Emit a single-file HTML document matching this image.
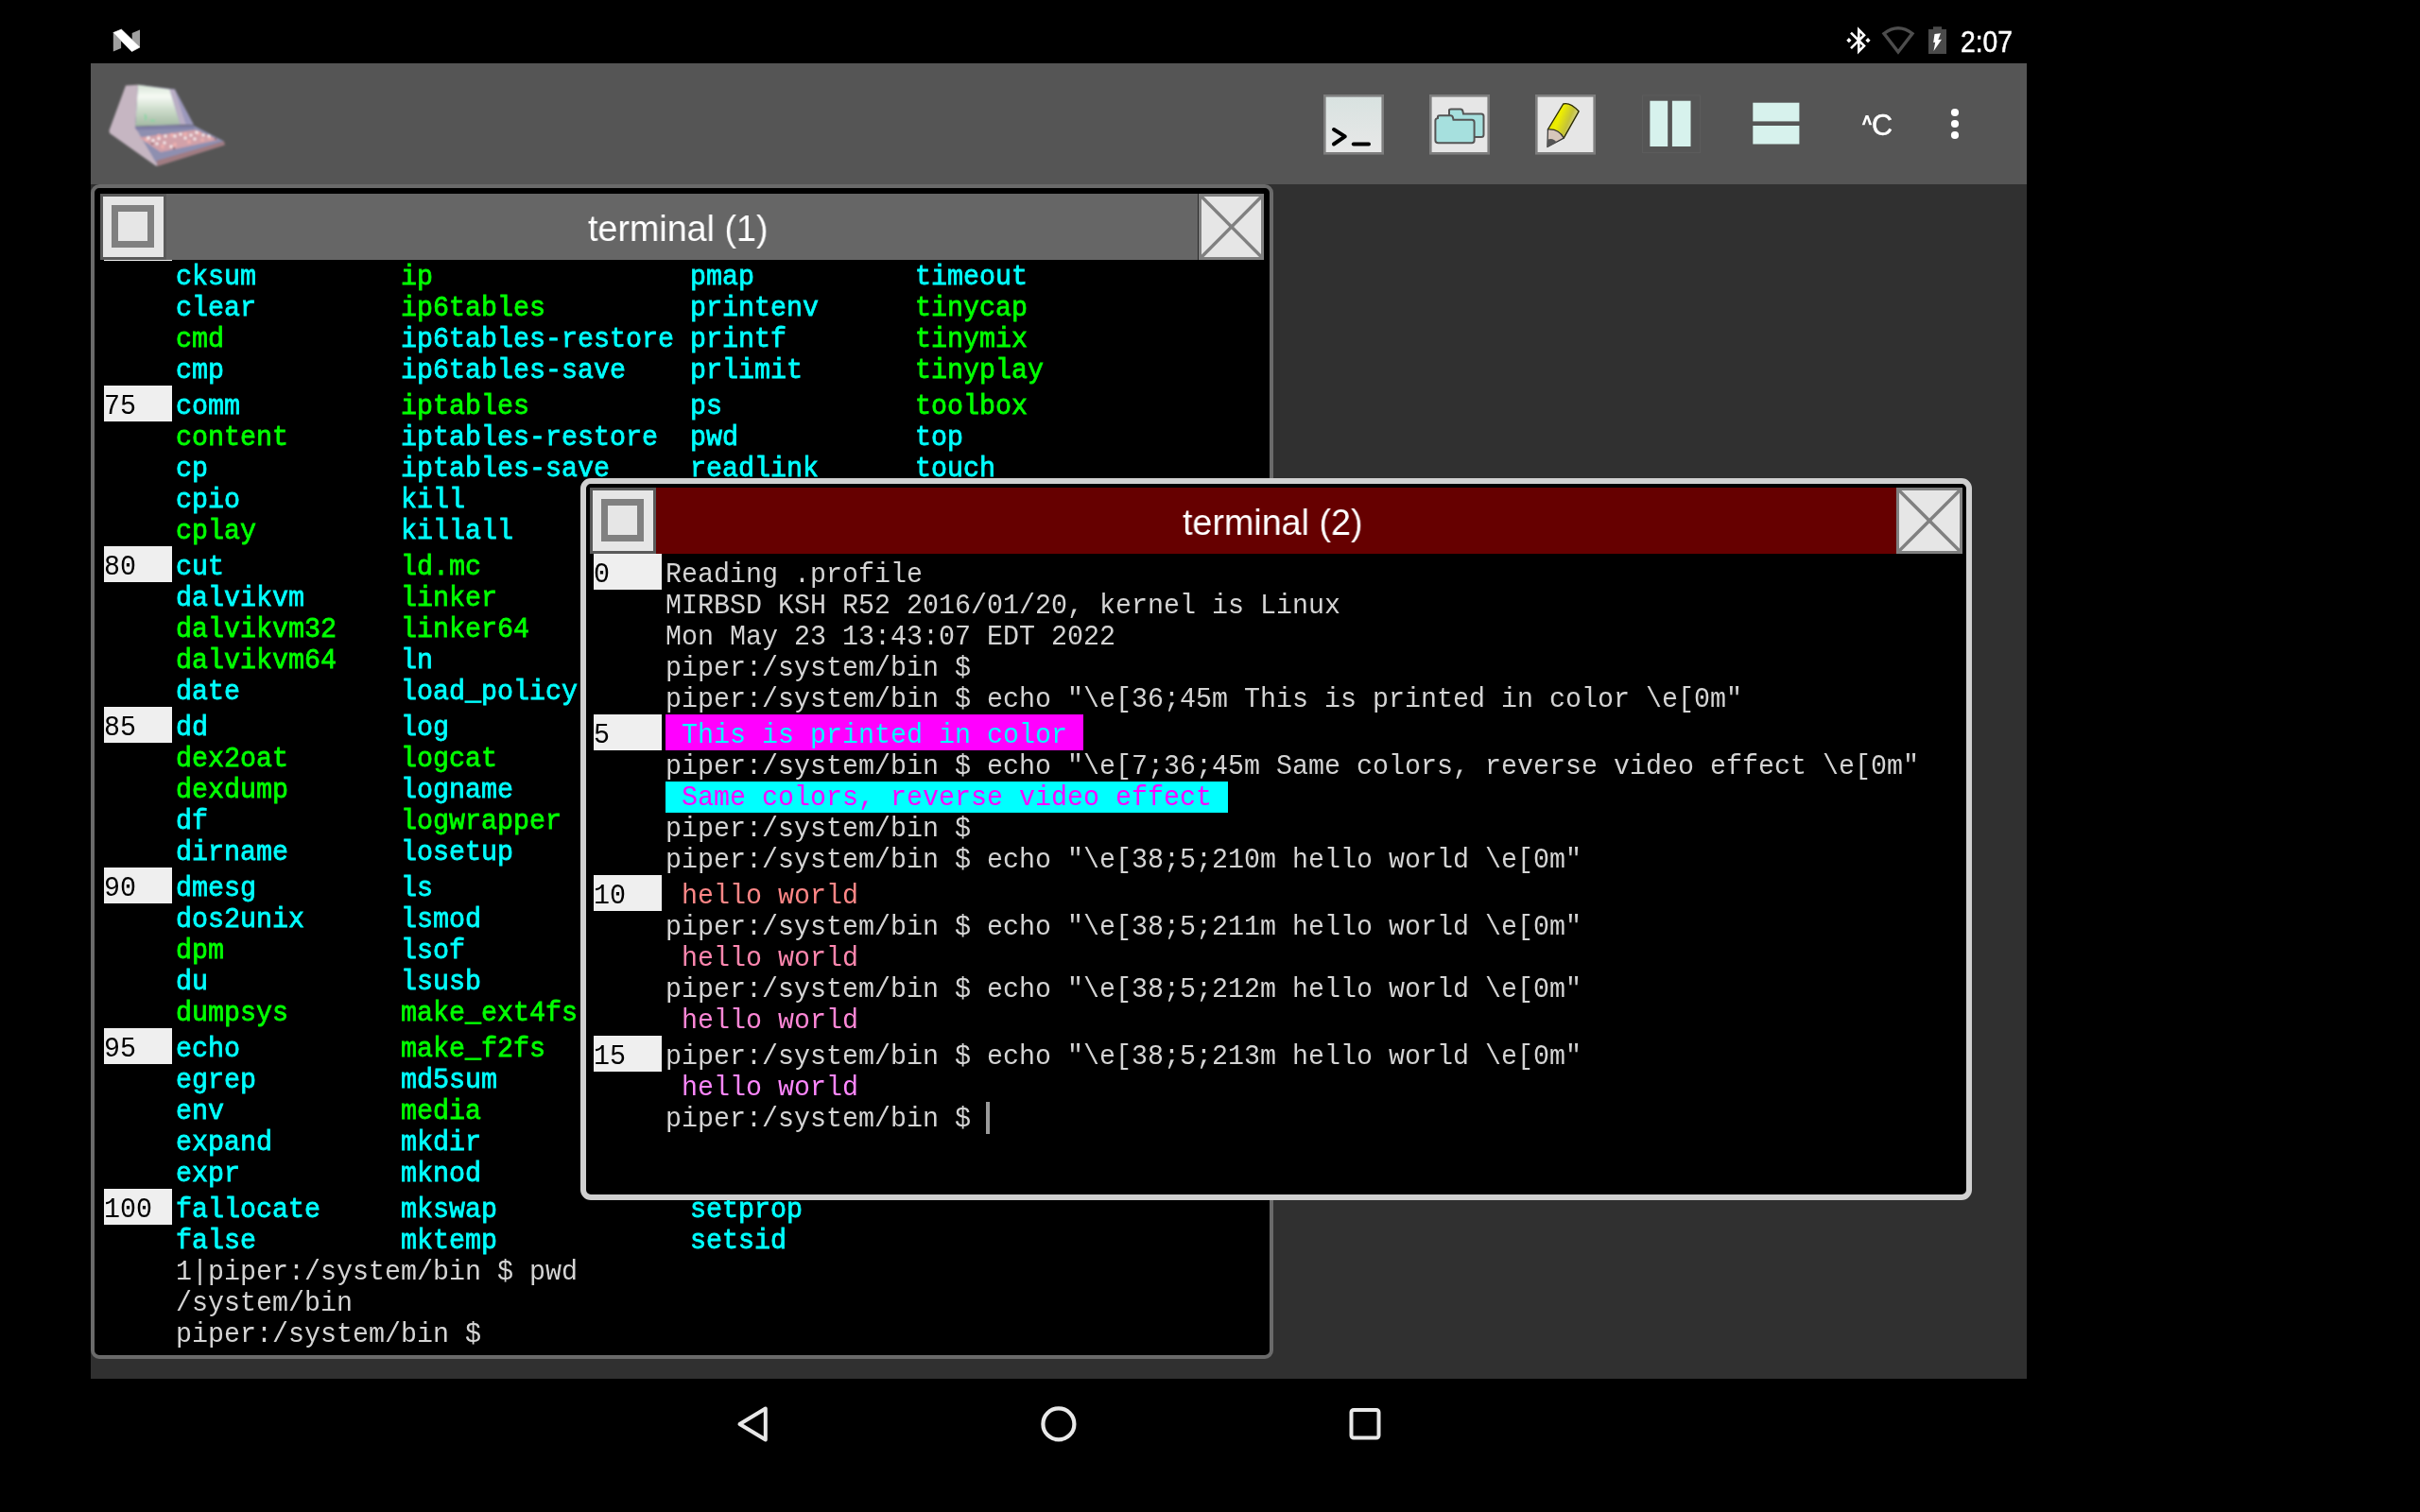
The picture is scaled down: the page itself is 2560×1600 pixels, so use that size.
<!DOCTYPE html>
<html><head><meta charset="utf-8">
<style>
html,body{margin:0;padding:0;}
.ln,.lnt,.title{will-change:transform;}
body{width:2560px;height:1600px;background:#000;position:relative;overflow:hidden;font-family:"Liberation Sans",sans-serif;}
.abs{position:absolute;}
#toolbar{position:absolute;left:96px;top:67px;width:2048px;height:128px;background:#555555;}
#desk{position:absolute;left:96px;top:195px;width:2048px;height:1264px;background:#303030;}
.win{position:absolute;box-sizing:border-box;background:#000;overflow:hidden;}
#w1{left:96px;top:195px;width:1251px;height:1243px;border:4px solid #6a6a6a;border-radius:9px;}
#w2{left:614px;top:506px;width:1472px;height:764px;border:6px solid #d0d0d0;border-radius:11px;}
.inner{position:absolute;left:0;top:0;}
.tb{position:absolute;}
.btn{position:absolute;width:70px;height:70px;}
.ln{position:absolute;white-space:pre;font-family:"Liberation Mono",monospace;font-size:28.333px;line-height:33px;color:#d4d4d4;transform:scaleY(1.05);transform-origin:0 24px;}
.b{font-weight:normal;-webkit-text-stroke:0.75px currentColor;}
.c{color:#00ffff;}
.g{color:#00ff00;}
.lnbox{position:absolute;width:72px;height:38px;background:#efefef;}
.lnt{position:absolute;left:0;white-space:pre;font-family:"Liberation Mono",monospace;font-size:28.333px;line-height:33px;color:#000;transform:scaleY(1.05);transform-origin:0 24px;}
.bgm{position:absolute;background:#ff00ff;}
.bgc{position:absolute;background:#00ffff;}
.bgmt{color:#00ffff;}
.bgct{color:#ff00ff;}
.h210t{color:#ff8787;}
.h211t{color:#ff87af;}
.h212t{color:#ff87d7;}
.h213t{color:#ff87ff;}
.title{position:absolute;color:#fff;font-size:39px;white-space:pre;line-height:40px;transform:scaleX(0.966);transform-origin:0 0;}
</style></head>
<body>
<!-- status bar -->
<svg class="abs" style="left:0;top:0" width="2560" height="67" viewBox="0 0 2560 67">
  <!-- N logo -->
  <polygon points="119.8,35 128.1,43.3 128.1,51.1 119.8,54.6" fill="#a0a0a0"/>
  <polygon points="139.7,34.9 148,31.4 148,50 139.7,41.8" fill="#a0a0a0"/>
  <polygon points="119.8,34.6 128.4,31.1 148,50 139.4,54.6" fill="#fff" stroke="#fff" stroke-width="0.6" stroke-linejoin="round"/>
  <!-- bluetooth -->
  <g fill="none" stroke="#fff" stroke-width="2.6" stroke-linejoin="miter">
    <polyline points="1958,34.6 1972,48.6 1966.3,54.3 1966.3,31.5 1972,37.2 1958,51.2"/>
  </g>
  <rect x="1954" y="40.9" width="3.7" height="3.7" fill="#fff" transform="rotate(45 1955.9 42.8)"/>
  <rect x="1974.1" y="40.9" width="3.7" height="3.7" fill="#fff" transform="rotate(45 1976 42.8)"/>
  <!-- wifi -->
  <path d="M1993,35.5 Q2008,24 2023,35.5 L2008,55 Z" fill="none" stroke="#4d4d4d" stroke-width="3.4" stroke-linejoin="miter"/>
  <!-- battery -->
  <rect x="2045" y="28.2" width="9" height="3" fill="#4a4a4a"/>
  <rect x="2040" y="31" width="19" height="26" fill="#4a4a4a"/>
  <polygon points="2046.5,36 2053,35.3 2050.3,42 2054,41.8 2045.5,54 2047.2,44.8 2045.2,45" fill="#fff"/>
  <text x="2074" y="54.5" font-family="Liberation Sans" font-size="30.5" fill="#fff" stroke="#fff" stroke-width="0.5" textLength="55" lengthAdjust="spacingAndGlyphs" style="will-change:transform">2:07</text>
</svg>

<div id="toolbar"></div>
<div id="desk"></div>

<!-- computer logo -->
<svg class="abs" style="left:110px;top:80px" width="140" height="105" viewBox="0 0 140 105">
  <defs>
    <linearGradient id="scr" x1="0" y1="0" x2="0" y2="1">
      <stop offset="0" stop-color="#d5e4d5"/><stop offset="0.28" stop-color="#f6faf4"/><stop offset="0.6" stop-color="#cddccb"/><stop offset="1" stop-color="#a3b9a3"/>
    </linearGradient>
    <filter id="bl" x="-10%" y="-10%" width="120%" height="120%"><feGaussianBlur stdDeviation="0.8"/></filter>
  </defs>
  <g filter="url(#bl)">
    <polygon points="23,10.4 36,9.7 33.3,53.5 57,93 55.5,96 6,61 5.5,58" fill="#c6b6c2"/>
    <polygon points="36,9.7 75,14.6 95,52 33,53.5" fill="#9b98bc"/>
    <polygon points="36,9.7 69.4,14.6 80.6,51.4 33.3,53.5" fill="url(#scr)"/>
    <polygon points="69.4,14.6 74.7,14.8 86.5,51.5 80.6,51.4" fill="#b9aec4"/>
    <polygon points="32.6,54 95,52.8 127,69.5 55.5,93" fill="#8e8fb0"/>
    <polygon points="55.5,90 127,69.5 128,73.5 56.5,96" fill="#a07c82"/>
    <polygon points="32.6,54 95,52.8 96,56 34,57.5" fill="#7f7fa6"/>
    <polygon points="37,65.5 97,57.5 121,68 60,81" fill="#d9a3a8" opacity="0.9"/>
    <g fill="#eaaeae">
      <circle cx="45" cy="68" r="2.2"/><circle cx="58" cy="64" r="2.2"/><circle cx="72" cy="63" r="2.2"/><circle cx="86" cy="62" r="2.2"/><circle cx="100" cy="61" r="2.2"/><circle cx="112" cy="66" r="2"/>
      <circle cx="62" cy="75" r="2.2"/><circle cx="75" cy="73" r="2.2"/><circle cx="90" cy="70" r="2.2"/><circle cx="104" cy="68" r="2"/>
    </g>
    <g fill="#fbf4f5">
      <circle cx="47" cy="66" r="1.7"/><circle cx="52" cy="68.5" r="1.6"/><circle cx="58" cy="66.5" r="1.6"/><circle cx="65" cy="64" r="1.5"/><circle cx="75" cy="64" r="1.6"/><circle cx="81" cy="62" r="1.5"/><circle cx="92" cy="63" r="1.5"/><circle cx="98" cy="60" r="1.6"/><circle cx="105" cy="63" r="1.4"/><circle cx="111" cy="64" r="1.4"/>
      <circle cx="56" cy="72" r="1.5"/><circle cx="64" cy="71" r="1.5"/><circle cx="71" cy="75" r="1.5"/><circle cx="86" cy="66" r="1.5"/><circle cx="96" cy="67" r="1.5"/>
    </g>
    <g fill="#6e4e56"><circle cx="51" cy="72" r="1.1"/><circle cx="74" cy="77" r="1.1"/><circle cx="118" cy="67" r="1.1"/></g>
    <path d="M43,41 Q45.5,44 43.5,47" stroke="#7fd7a0" stroke-width="1.6" fill="none"/>
    <path d="M49,47.5 L54,47.5" stroke="#7fd7a0" stroke-width="1.6" fill="none"/>
  </g>
</svg>

<!-- toolbar icons -->
<svg class="abs" style="left:1400px;top:99.5px" width="64" height="64" viewBox="0 0 64 64">
  <defs><linearGradient id="tg" x1="0" y1="0" x2="0" y2="1"><stop offset="0" stop-color="#d8e2e0"/><stop offset="1" stop-color="#e8e8e8"/></linearGradient></defs>
  <rect x="1.3" y="1.3" width="61.4" height="61" fill="url(#tg)" stroke="#7e7e7e" stroke-width="2.6"/>
  <polyline points="11,37 22.8,44.4 11,52.5" fill="none" stroke="#000" stroke-width="4" stroke-linecap="round" stroke-linejoin="round"/>
  <line x1="31.8" y1="52.5" x2="48" y2="52.5" stroke="#000" stroke-width="4" stroke-linecap="round"/>
</svg>
<svg class="abs" style="left:1512px;top:99.5px" width="64" height="64" viewBox="0 0 64 64">
  <rect x="1.3" y="1.3" width="61.4" height="61" fill="#e6e6e6" stroke="#7e7e7e" stroke-width="2.6"/>
  <path d="M21,16.5 Q21,15.5 23,15.5 L33,15.5 Q35,15.5 35.5,18 L36,20.5 L55,20.5 Q57.5,20.5 57.5,23 L57.5,42.5 Q57.5,45 55,45 L24,45 L21,42 Z" fill="#a6e0de" stroke="#555" stroke-width="2"/>
  <path d="M9,23.5 Q9,22.3 11,22.3 L22.5,22.3 Q24.5,22.3 25,24.5 L25.5,26.8 L45,26.8 Q47.6,26.8 47.6,29.5 L47.6,48.5 Q47.6,51.3 45,51.3 L9.5,51.3 Q6.4,51.3 6.4,48.5 L6.4,27.5 Q6.4,25.5 9,25 Z" fill="#a6e0de" stroke="#555" stroke-width="2"/>
</svg>
<svg class="abs" style="left:1624px;top:99.5px" width="64" height="64" viewBox="0 0 64 64">
  <defs>
    <linearGradient id="pg" x1="0" y1="0" x2="1" y2="0.45"><stop offset="0" stop-color="#d6d600"/><stop offset="0.45" stop-color="#eeee00"/><stop offset="0.75" stop-color="#c4c23a"/><stop offset="1" stop-color="#dcdcb0"/></linearGradient>
  </defs>
  <rect x="1.3" y="1.3" width="61.4" height="61" fill="#e6e6e6" stroke="#7e7e7e" stroke-width="2.6"/>
  <path d="M13.4,37 L29.7,10 Q37,8 46.1,17.8 L30.2,46.1 Z" fill="url(#pg)" stroke="#2a2a00" stroke-width="1.4" stroke-linejoin="round"/>
  <path d="M13.4,37 Q25,36 30.2,46.1 L12.9,55.5 Z" fill="#d6c6bb" stroke="#333" stroke-width="1.2" stroke-linejoin="round"/>
  <path d="M13,47.5 Q19.5,45.5 22.5,50.5 L12.9,55.5 Z" fill="#555"/>
</svg>
<!-- split icons -->
<svg class="abs" style="left:1720px;top:90px" width="200" height="80" viewBox="1720 90 200 80">
  <defs><filter id="sb" x="-20%" y="-20%" width="140%" height="140%"><feGaussianBlur stdDeviation="0.45"/></filter></defs>
  <rect x="1737.5" y="101" width="61" height="60.5" fill="none" stroke="#5c5c5c" stroke-width="1"/>
  <g filter="url(#sb)" fill="#d7f2ed">
    <rect x="1745.4" y="106.7" width="18.8" height="48.3"/>
    <rect x="1768.9" y="106.7" width="19.6" height="48.3"/>
    <rect x="1854.3" y="108.7" width="49.1" height="19.7"/>
    <rect x="1854.3" y="133" width="49.1" height="19.5"/>
  </g>
</svg>
<svg class="abs" style="left:1960px;top:105px;will-change:transform" width="50" height="50" viewBox="1960 105 50 50"><polygon points="1969.7,132.2 1973.6,121.9 1976.4,121.9 1980.3,132.2 1977.4,132.2 1975,125.3 1972.6,132.2" fill="#fff"/><text x="1980" y="143" font-family="Liberation Sans" font-size="30.5" fill="#fff" stroke="#fff" stroke-width="0.5">C</text></svg>
<svg class="abs" style="left:2058px;top:110px" width="20" height="42" viewBox="0 0 20 42">
  <circle cx="10" cy="9" r="4.1" fill="#fff"/><circle cx="10" cy="21" r="4.1" fill="#fff"/><circle cx="10" cy="33" r="4.1" fill="#fff"/>
</svg>

<!-- window 1 -->
<div class="win" id="w1"></div>
<div class="abs" style="left:0;top:0;width:2560px;height:1600px;">
  <div style="position:absolute;left:100px;top:199px;width:1243px;height:1235px;overflow:hidden;">
    <div style="position:absolute;left:-100px;top:-199px;width:2560px;height:1600px;">
<div class="ln b c" style="left:186px;top:277px">cksum</div>
<div class="ln b g" style="left:424px;top:277px">ip</div>
<div class="ln b c" style="left:730px;top:277px">pmap</div>
<div class="ln b c" style="left:968px;top:277px">timeout</div>
<div class="ln b c" style="left:186px;top:310px">clear</div>
<div class="ln b g" style="left:424px;top:310px">ip6tables</div>
<div class="ln b c" style="left:730px;top:310px">printenv</div>
<div class="ln b g" style="left:968px;top:310px">tinycap</div>
<div class="ln b g" style="left:186px;top:343px">cmd</div>
<div class="ln b c" style="left:424px;top:343px">ip6tables-restore</div>
<div class="ln b c" style="left:730px;top:343px">printf</div>
<div class="ln b g" style="left:968px;top:343px">tinymix</div>
<div class="ln b c" style="left:186px;top:376px">cmp</div>
<div class="ln b c" style="left:424px;top:376px">ip6tables-save</div>
<div class="ln b c" style="left:730px;top:376px">prlimit</div>
<div class="ln b g" style="left:968px;top:376px">tinyplay</div>
<div class="lnbox" style="left:110px;top:408px"><span class="lnt" style="top:6px">75</span></div>
<div class="ln b c" style="left:186px;top:414px">comm</div>
<div class="ln b g" style="left:424px;top:414px">iptables</div>
<div class="ln b c" style="left:730px;top:414px">ps</div>
<div class="ln b g" style="left:968px;top:414px">toolbox</div>
<div class="ln b g" style="left:186px;top:447px">content</div>
<div class="ln b c" style="left:424px;top:447px">iptables-restore</div>
<div class="ln b c" style="left:730px;top:447px">pwd</div>
<div class="ln b c" style="left:968px;top:447px">top</div>
<div class="ln b c" style="left:186px;top:480px">cp</div>
<div class="ln b c" style="left:424px;top:480px">iptables-save</div>
<div class="ln b c" style="left:730px;top:480px">readlink</div>
<div class="ln b c" style="left:968px;top:480px">touch</div>
<div class="ln b c" style="left:186px;top:513px">cpio</div>
<div class="ln b c" style="left:424px;top:513px">kill</div>
<div class="ln b g" style="left:186px;top:546px">cplay</div>
<div class="ln b c" style="left:424px;top:546px">killall</div>
<div class="lnbox" style="left:110px;top:578px"><span class="lnt" style="top:6px">80</span></div>
<div class="ln b c" style="left:186px;top:584px">cut</div>
<div class="ln b g" style="left:424px;top:584px">ld.mc</div>
<div class="ln b c" style="left:186px;top:617px">dalvikvm</div>
<div class="ln b g" style="left:424px;top:617px">linker</div>
<div class="ln b g" style="left:186px;top:650px">dalvikvm32</div>
<div class="ln b g" style="left:424px;top:650px">linker64</div>
<div class="ln b g" style="left:186px;top:683px">dalvikvm64</div>
<div class="ln b c" style="left:424px;top:683px">ln</div>
<div class="ln b c" style="left:186px;top:716px">date</div>
<div class="ln b c" style="left:424px;top:716px">load_policy</div>
<div class="lnbox" style="left:110px;top:748px"><span class="lnt" style="top:6px">85</span></div>
<div class="ln b c" style="left:186px;top:754px">dd</div>
<div class="ln b c" style="left:424px;top:754px">log</div>
<div class="ln b g" style="left:186px;top:787px">dex2oat</div>
<div class="ln b g" style="left:424px;top:787px">logcat</div>
<div class="ln b g" style="left:186px;top:820px">dexdump</div>
<div class="ln b c" style="left:424px;top:820px">logname</div>
<div class="ln b c" style="left:186px;top:853px">df</div>
<div class="ln b g" style="left:424px;top:853px">logwrapper</div>
<div class="ln b c" style="left:186px;top:886px">dirname</div>
<div class="ln b c" style="left:424px;top:886px">losetup</div>
<div class="lnbox" style="left:110px;top:918px"><span class="lnt" style="top:6px">90</span></div>
<div class="ln b c" style="left:186px;top:924px">dmesg</div>
<div class="ln b c" style="left:424px;top:924px">ls</div>
<div class="ln b c" style="left:186px;top:957px">dos2unix</div>
<div class="ln b c" style="left:424px;top:957px">lsmod</div>
<div class="ln b g" style="left:186px;top:990px">dpm</div>
<div class="ln b c" style="left:424px;top:990px">lsof</div>
<div class="ln b c" style="left:186px;top:1023px">du</div>
<div class="ln b c" style="left:424px;top:1023px">lsusb</div>
<div class="ln b g" style="left:186px;top:1056px">dumpsys</div>
<div class="ln b g" style="left:424px;top:1056px">make_ext4fs</div>
<div class="lnbox" style="left:110px;top:1088px"><span class="lnt" style="top:6px">95</span></div>
<div class="ln b c" style="left:186px;top:1094px">echo</div>
<div class="ln b g" style="left:424px;top:1094px">make_f2fs</div>
<div class="ln b c" style="left:186px;top:1127px">egrep</div>
<div class="ln b c" style="left:424px;top:1127px">md5sum</div>
<div class="ln b c" style="left:186px;top:1160px">env</div>
<div class="ln b g" style="left:424px;top:1160px">media</div>
<div class="ln b c" style="left:186px;top:1193px">expand</div>
<div class="ln b c" style="left:424px;top:1193px">mkdir</div>
<div class="ln b c" style="left:186px;top:1226px">expr</div>
<div class="ln b c" style="left:424px;top:1226px">mknod</div>
<div class="lnbox" style="left:110px;top:1258px"><span class="lnt" style="top:6px">100</span></div>
<div class="ln b c" style="left:186px;top:1264px">fallocate</div>
<div class="ln b c" style="left:424px;top:1264px">mkswap</div>
<div class="ln b c" style="left:730px;top:1264px">setprop</div>
<div class="ln b c" style="left:186px;top:1297px">false</div>
<div class="ln b c" style="left:424px;top:1297px">mktemp</div>
<div class="ln b c" style="left:730px;top:1297px">setsid</div>
<div class="ln" style="left:186px;top:1330px">1|piper:/system/bin $ pwd</div>
<div class="ln" style="left:186px;top:1363px">/system/bin</div>
<div class="ln" style="left:186px;top:1396px">piper:/system/bin $ </div>
    </div>
  </div>
  <!-- line 70 box bottom edge -->
  <div class="abs" style="left:110px;top:274px;width:72px;height:2px;background:#f0f0f0"></div>
  <!-- title bar w1 -->
  <div class="abs" style="left:176px;top:205px;width:1091px;height:70px;background:#666666;"></div>
  <div class="abs" style="left:1267px;top:205px;width:1px;height:70px;background:#2a2a2a;"></div>
  <div class="title" id="t1" style="left:622px;top:222px">terminal (1)</div>
  <svg class="abs" style="left:106px;top:205px" width="70" height="70" viewBox="0 0 70 70">
    <rect x="1.5" y="1.5" width="67" height="67" fill="#e6e6e6" stroke="#5a5a5a" stroke-width="3"/>
    <rect x="15.5" y="15.5" width="38" height="38" fill="none" stroke="#808080" stroke-width="7"/>
  </svg>
  <svg class="abs" style="left:1268px;top:205px" width="70" height="70" viewBox="0 0 70 70">
    <rect x="1.5" y="1.5" width="66" height="67" fill="#e6e6e6" stroke="#808080" stroke-width="3"/>
    <line x1="2" y1="2" x2="67.5" y2="68" stroke="#808080" stroke-width="3.4"/>
    <line x1="67.5" y1="2" x2="2" y2="68" stroke="#808080" stroke-width="3.4"/>
  </svg>
</div>

<!-- window 2 -->
<div class="win" id="w2"></div>
<div class="abs" style="left:0;top:0;width:2560px;height:1600px;">
  <div style="position:absolute;left:620px;top:512px;width:1460px;height:752px;overflow:hidden;">
    <div style="position:absolute;left:-620px;top:-512px;width:2560px;height:1600px;">
<div class="lnbox" style="left:628px;top:586px"><span class="lnt" style="top:6px">0</span></div>
<div class="ln" style="left:704px;top:592px">Reading .profile</div>
<div class="ln" style="left:704px;top:625px">MIRBSD KSH R52 2016/01/20, kernel is Linux</div>
<div class="ln" style="left:704px;top:658px">Mon May 23 13:43:07 EDT 2022</div>
<div class="ln" style="left:704px;top:691px">piper:/system/bin $ </div>
<div class="ln" style="left:704px;top:724px">piper:/system/bin $ echo "\e[36;45m This is printed in color \e[0m"</div>
<div class="lnbox" style="left:628px;top:756px"><span class="lnt" style="top:6px">5</span></div>
<div class="bgm" style="left:704px;top:756px;width:442px;height:38px"></div>
<div class="ln bgmt" style="left:704px;top:762px"> This is printed in color </div>
<div class="ln" style="left:704px;top:795px">piper:/system/bin $ echo "\e[7;36;45m Same colors, reverse video effect \e[0m"</div>
<div class="bgc" style="left:704px;top:827px;width:595px;height:33px"></div>
<div class="ln bgct" style="left:704px;top:828px"> Same colors, reverse video effect </div>
<div class="ln" style="left:704px;top:861px">piper:/system/bin $ </div>
<div class="ln" style="left:704px;top:894px">piper:/system/bin $ echo "\e[38;5;210m hello world \e[0m"</div>
<div class="lnbox" style="left:628px;top:926px"><span class="lnt" style="top:6px">10</span></div>
<div class="ln h210t" style="left:704px;top:932px"> hello world </div>
<div class="ln" style="left:704px;top:965px">piper:/system/bin $ echo "\e[38;5;211m hello world \e[0m"</div>
<div class="ln h211t" style="left:704px;top:998px"> hello world </div>
<div class="ln" style="left:704px;top:1031px">piper:/system/bin $ echo "\e[38;5;212m hello world \e[0m"</div>
<div class="ln h212t" style="left:704px;top:1064px"> hello world </div>
<div class="lnbox" style="left:628px;top:1096px"><span class="lnt" style="top:6px">15</span></div>
<div class="ln" style="left:704px;top:1102px">piper:/system/bin $ echo "\e[38;5;213m hello world \e[0m"</div>
<div class="ln h213t" style="left:704px;top:1135px"> hello world </div>
<div class="ln" style="left:704px;top:1168px">piper:/system/bin $ </div>
      <div class="abs" style="left:1043px;top:1166px;width:4px;height:34px;background:#9a9a9a"></div>
    </div>
  </div>
  <div class="abs" style="left:694px;top:516px;width:1312px;height:70px;background:#660000;"></div>
  <div class="title" id="t2" style="left:1251px;top:533px">terminal (2)</div>
  <svg class="abs" style="left:624px;top:516px" width="70" height="70" viewBox="0 0 70 70">
    <rect x="1.5" y="1.5" width="67" height="67" fill="#e6e6e6" stroke="#5a5a5a" stroke-width="3"/>
    <rect x="15.5" y="15.5" width="38" height="38" fill="none" stroke="#808080" stroke-width="7"/>
  </svg>
  <svg class="abs" style="left:2006px;top:516px" width="70" height="70" viewBox="0 0 70 70">
    <rect x="1.5" y="1.5" width="67" height="67" fill="#e6e6e6" stroke="#808080" stroke-width="3"/>
    <line x1="2" y1="2" x2="68" y2="68" stroke="#808080" stroke-width="3.4"/>
    <line x1="68" y1="2" x2="2" y2="68" stroke="#808080" stroke-width="3.4"/>
  </svg>
</div>

<!-- nav bar -->
<svg class="abs" style="left:0;top:1459px" width="2560" height="141" viewBox="0 1459 2560 141">
  <polygon points="782.5,1507 809.8,1490.5 809.8,1523.5" fill="none" stroke="#e8e8e8" stroke-width="4" stroke-linejoin="round"/>
  <circle cx="1119.9" cy="1506.9" r="16.5" fill="none" stroke="#e8e8e8" stroke-width="4.2"/>
  <rect x="1429.5" y="1492" width="29" height="29.5" rx="2.5" fill="none" stroke="#e8e8e8" stroke-width="4"/>
</svg>
</body></html>
